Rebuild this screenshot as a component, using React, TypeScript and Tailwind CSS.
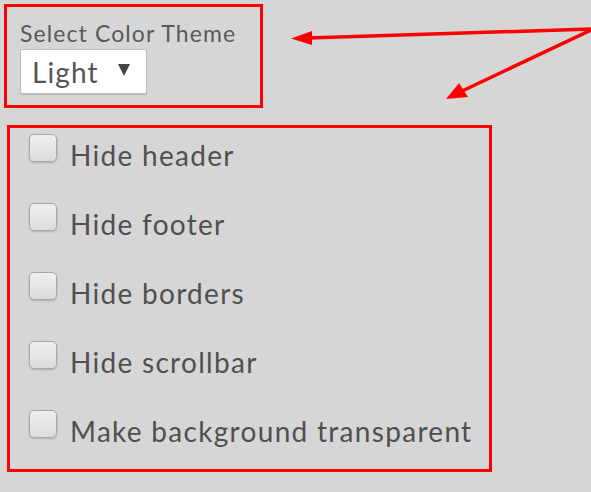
import React from "react";

const items = [
  "Hide header",
  "Hide footer",
  "Hide borders",
  "Hide scrollbar",
  "Make background transparent",
];

export default function App() {
  return (
    <div
      className="relative w-[591px] h-[492px] overflow-hidden bg-[#d6d6d6] text-[#555555]"
      style={{ fontFamily: "Lato, 'Open Sans', sans-serif" }}
    >
      <div className="pt-[4px] pl-[4px]">
        <div className="w-[259px] h-[104px] border-[3px] border-[#ff0000] pl-[13px] pt-[12px]">
          <div className="text-[23px] leading-[28px] tracking-[1.1px] text-[#5a5a5a] whitespace-nowrap">Select Color Theme</div>
          <div className="mt-[2px] w-[127px] h-[45px] bg-white border border-[#bdbdbd] rounded-[2px] flex items-center pl-[11px] shadow-[0_1px_1px_rgba(0,0,0,0.15)]">
            <span className="text-[28px] leading-none tracking-[1.1px] text-[#555555]">Light</span>
            <svg className="ml-[19px] mt-[-4px]" width="12" height="12" viewBox="0 0 12 12">
              <polygon points="0,0 12,0 6,12" fill="#444444" />
            </svg>
          </div>
        </div>
      </div>
      <div className="ml-[7px] mt-[17px] w-[485px] h-[347px] border-[3px] border-[#ff0000] pl-[19px] pt-[6px] flex flex-col gap-[41px]">
        {items.map((t) => (
          <div key={t} className="flex items-start h-[28px]">
            <div className="w-[28px] h-[28px] rounded-[5px] border border-[#a8a8a8] bg-gradient-to-b from-[#efefef] to-[#dcdcdc] shadow-[0_1px_2px_rgba(0,0,0,0.2)]" />
            <span className="ml-[13px] mt-[7px] text-[28px] leading-[28px] tracking-[1.3px] text-[#505050] whitespace-nowrap">{t}</span>
          </div>
        ))}
      </div>
      <svg className="absolute inset-0 pointer-events-none" width="591" height="492" viewBox="0 0 591 492">
        <line x1="591" y1="29" x2="308" y2="38" stroke="#ff0000" strokeWidth="3.5" />
        <polygon points="291,38.5 312,31 312,45" fill="#ff0000" />
        <line x1="591" y1="30" x2="460" y2="92" stroke="#ff0000" strokeWidth="3.5" />
        <polygon points="446,99 459,83 468,97" fill="#ff0000" />
      </svg>
    </div>
  );
}
